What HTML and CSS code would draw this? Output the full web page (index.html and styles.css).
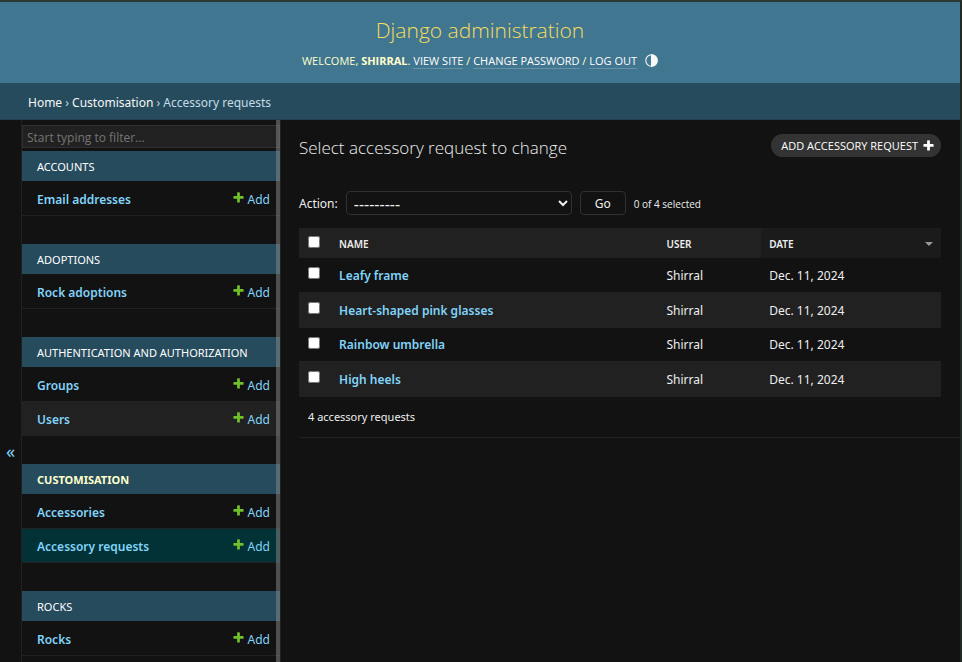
FILE: index.html
```html
<!DOCTYPE html>
<html lang="en">
<head>
<meta charset="utf-8">
<title>Select accessory request to change | Django site admin</title>
<link rel="stylesheet" href="styles.css">
</head>
<body>
<svg class="sprite" aria-hidden="true">
  <symbol id="plus" viewBox="0 0 1792 1792"><path d="M1600 796v192q0 40-28 68t-68 28h-416v416q0 40-28 68t-68 28h-192q-40 0-68-28t-28-68v-416h-416q-40 0-68-28t-28-68v-192q0-40 28-68t68-28h416v-416q0-40 28-68t68-28h192q40 0 68 28t28 68v416h416q40 0 68 28t28 68z"/></symbol>
</svg>
<div class="page">
  <header class="header">
    <h1 class="site-name"><a href="#">Django administration</a></h1>
    <div class="user-tools">
      <span>Welcome, <strong>Shirral</strong>. <a href="#">View site</a> / <a href="#">Change password</a> / <a href="#">Log out</a></span>
      <button class="theme-toggle" type="button" aria-label="Toggle theme">
        <svg viewBox="0 0 24 24"><circle cx="12" cy="12" r="10.5"/><path d="M12 1.500a10.500 10.500 0 0 1 0 21z"/></svg>
      </button>
    </div>
  </header>
  <nav class="breadcrumbs" aria-label="Breadcrumbs"><a href="#">Home</a> › <a href="#">Customisation</a> › Accessory requests</nav>
  <div class="main">
    <button class="nav-toggle" type="button" aria-label="Toggle navigation">«</button>
    <nav class="sidebar" aria-label="Sidebar">
      <input class="filter" type="search" placeholder="Start typing to filter..." aria-label="Filter navigation items">
      <section class="module">
        <h2><a href="#">Accounts</a></h2>
        <div class="model"><a class="model-name" href="#">Email addresses</a><a class="add" href="#"><svg><use href="#plus"/></svg>Add</a></div>
      </section>
      <section class="module">
        <h2><a href="#">Adoptions</a></h2>
        <div class="model"><a class="model-name" href="#">Rock adoptions</a><a class="add" href="#"><svg><use href="#plus"/></svg>Add</a></div>
      </section>
      <section class="module">
        <h2><a href="#">Authentication and Authorization</a></h2>
        <div class="model"><a class="model-name" href="#">Groups</a><a class="add" href="#"><svg><use href="#plus"/></svg>Add</a></div>
        <div class="model alt"><a class="model-name" href="#">Users</a><a class="add" href="#"><svg><use href="#plus"/></svg>Add</a></div>
      </section>
      <section class="module current-app">
        <h2><a href="#">Customisation</a></h2>
        <div class="model"><a class="model-name" href="#">Accessories</a><a class="add" href="#"><svg><use href="#plus"/></svg>Add</a></div>
        <div class="model current"><a class="model-name" href="#">Accessory requests</a><a class="add" href="#"><svg><use href="#plus"/></svg>Add</a></div>
      </section>
      <section class="module">
        <h2><a href="#">Rocks</a></h2>
        <div class="model"><a class="model-name" href="#">Rocks</a><a class="add" href="#"><svg><use href="#plus"/></svg>Add</a></div>
      </section>
      <span class="scrollbar"></span>
    </nav>
    <main class="content">
      <div class="title-row">
        <h1>Select accessory request to change</h1>
        <a class="add-object" href="#">Add accessory request<svg><use href="#plus"/></svg></a>
      </div>
      <form class="changelist">
        <div class="actions">
          <label for="action">Action:</label>
          <select id="action"><option>---------</option></select>
          <button class="go" type="submit">Go</button>
          <span class="counter">0 of 4 selected</span>
        </div>
        <table class="results">
          <colgroup><col class="col-check"><col class="col-name"><col class="col-user"><col class="col-date"></colgroup>
          <thead>
            <tr>
              <th><input type="checkbox" aria-label="Select all"></th>
              <th>Name</th>
              <th>User</th>
              <th class="sorted"><div>Date<svg viewBox="0 0 8 4"><path d="M0 0h8L4 4z"/></svg></div></th>
            </tr>
          </thead>
          <tbody>
            <tr><td><input type="checkbox" aria-label="Select Leafy frame"></td><th scope="row"><a href="#">Leafy frame</a></th><td>Shirral</td><td>Dec. 11, 2024</td></tr>
            <tr><td><input type="checkbox" aria-label="Select Heart-shaped pink glasses"></td><th scope="row"><a href="#">Heart-shaped pink glasses</a></th><td>Shirral</td><td>Dec. 11, 2024</td></tr>
            <tr><td><input type="checkbox" aria-label="Select Rainbow umbrella"></td><th scope="row"><a href="#">Rainbow umbrella</a></th><td>Shirral</td><td>Dec. 11, 2024</td></tr>
            <tr><td><input type="checkbox" aria-label="Select High heels"></td><th scope="row"><a href="#">High heels</a></th><td>Shirral</td><td>Dec. 11, 2024</td></tr>
          </tbody>
        </table>
        <p class="paginator">4 accessory requests</p>
      </form>
    </main>
  </div>
</div>
</body>
</html>
```
FILE: styles.css
```css
* { box-sizing: border-box; }

body {
  margin: 0;
  background: #121212;
  color: #eee;
  font: 12px/16px "Noto Sans", "Open Sans", sans-serif;
}

a { color: #81d4fa; text-decoration: none; }
h1, h2, p { margin: 0; }
h1 { font-family: "Open Sans", "Noto Sans", sans-serif; font-weight: 300; }
button, input, select { font: inherit; color: inherit; }
.sprite { display: none; }

.page {
  display: flex;
  flex-direction: column;
  height: 100vh;
  overflow: hidden;
  border-top: 2px solid #2c3833;
  border-right: 2px solid #222a26;
}

.header {
  display: flex;
  flex-direction: column;
  align-items: center;
  flex: none;
  padding: 12px 40px 14px;
  background: #417690;
}
.site-name { font-size: 21px; line-height: 32px; }
.site-name a { color: #f5dd5d; }
.user-tools {
  display: flex;
  align-items: center;
  gap: 8px;
  padding-top: 6px;
  color: #ffc;
  font-family: "Open Sans", "Noto Sans", sans-serif;
  font-size: 11px;
  line-height: 17px;
  text-transform: uppercase;
}
.user-tools a { color: #fff; border-bottom: 1px solid #6791a6; }
.theme-toggle {
  display: flex;
  padding: 0;
  border: 0;
  background: none;
}
.theme-toggle svg { width: 13px; height: 13px; fill: none; stroke: #f7f7f7; stroke-width: 2; }
.theme-toggle path { fill: #f7f7f7; }

.breadcrumbs {
  flex: none;
  padding: 12px 28px 8px;
  border-bottom: 1px solid #213f50;
  background: #264b5d;
  color: #c4dce8;
}
.breadcrumbs a { color: #f7f7f7; }

.main { display: flex; flex: 1; min-height: 0; }

.nav-toggle {
  flex: none;
  width: 22px;
  height: 100vh;
  padding: 0;
  border: 0;
  border-right: 1px solid #212121;
  background: #121212;
  color: #81d4fa;
  font-size: 18px;
}
.sidebar {
  position: relative;
  flex: none;
  width: 259px;
  padding-top: 5px;
  border-right: 1px solid #212121;
}
.filter {
  display: block;
  width: 100%;
  height: 23px;
  margin-bottom: 3px;
  padding: 2px 4px 0;
  border: 1px solid #303030;
  background: #212121;
  font-family: "Open Sans", "Noto Sans", sans-serif;
}
.filter::placeholder { color: #757575; }
.module { margin-bottom: 28px; }
.module h2 {
  padding: 8px 15px 6px;
  background: #264b5d;
  font-size: 11px;
  line-height: 16px;
  font-weight: 400;
  text-transform: uppercase;
}
.module h2 a { color: #fff; }
.current-app h2 { font-weight: 700; }
.current-app h2 a { color: #ffc; }
.model {
  display: flex;
  justify-content: space-between;
  padding: 11px 10px 7px 15px;
  border-bottom: 1px solid #212121;
}
.model + .model { padding-top: 10px; }
.model.alt { background: #212121; }
.model.current { background: #023236; }
.model-name { font-weight: 600; }
.add { display: flex; gap: 3px; }
.add svg { width: 13px; height: 13px; margin-top: -1px; fill: #70bf2b; }
.scrollbar {
  position: absolute;
  top: 0;
  right: 0;
  bottom: 0;
  width: 4px;
  background: rgba(140, 140, 140, .5);
}

.content { flex: 1; min-width: 0; padding: 14px 19px 0 18px; }
.title-row {
  display: flex;
  justify-content: space-between;
  align-items: flex-start;
  margin-bottom: 30px;
}
.title-row h1 { font-size: 17px; line-height: 27px; }
.add-object {
  display: flex;
  align-items: center;
  gap: 4px;
  height: 23px;
  padding: 0 6px 0 10px;
  border-radius: 12px;
  background: #333;
  color: #fff;
  font-family: "Open Sans", "Noto Sans", sans-serif;
  font-size: 11px;
  text-transform: uppercase;
}
.add-object svg { width: 13px; height: 13px; fill: #fff; }

.actions { display: flex; align-items: center; margin-bottom: 13px; }
.actions label, .counter { padding-top: 2px; }
.actions select {
  width: 226px;
  height: 24px;
  margin: 0 8px;
  padding: 0 3px;
  border: 1px solid #303030;
  border-radius: 4px;
  background: #121212;
  font-size: 16px;
}
.go {
  width: 46px;
  height: 24px;
  padding: 2px 0 0;
  border: 1px solid #303030;
  border-radius: 4px;
  background: #121212;
}
.counter { margin-left: 8px; font-family: "Open Sans", "Noto Sans", sans-serif; font-size: 10px; }

.results { width: 100%; table-layout: fixed; border-collapse: collapse; }
.col-check { width: 5%; }
.col-name { width: 51%; }
.col-user { width: 16%; }
.col-date { width: 28%; }
.results th, .results td { padding: 0 8px; text-align: left; }
.results td, .results tbody th { height: 34px; padding-top: 2px; border-bottom: 1px solid #212121; }
.results tbody tr:nth-child(even) > * { height: 35px; }
.results thead th {
  height: 30px;
  padding-top: 2px;
  background: #212121;
  font-size: 10px;
  font-weight: 600;
  text-transform: uppercase;
}
.results thead .sorted { background: #1b1b1b; }
.sorted div { display: flex; align-items: center; justify-content: space-between; }
.sorted svg { width: 8px; height: 4px; fill: #999; }
.results tbody th { font-weight: 600; }
.results tbody tr:nth-child(even) { background: #212121; }
.results input { display: block; width: 12px; height: 12px; margin: 0 0 5px 1px; }

.paginator {
  margin-right: -19px;
  padding: 12px 9px;
  border-bottom: 1px solid #212121;
  font-size: 11px;
}
```
